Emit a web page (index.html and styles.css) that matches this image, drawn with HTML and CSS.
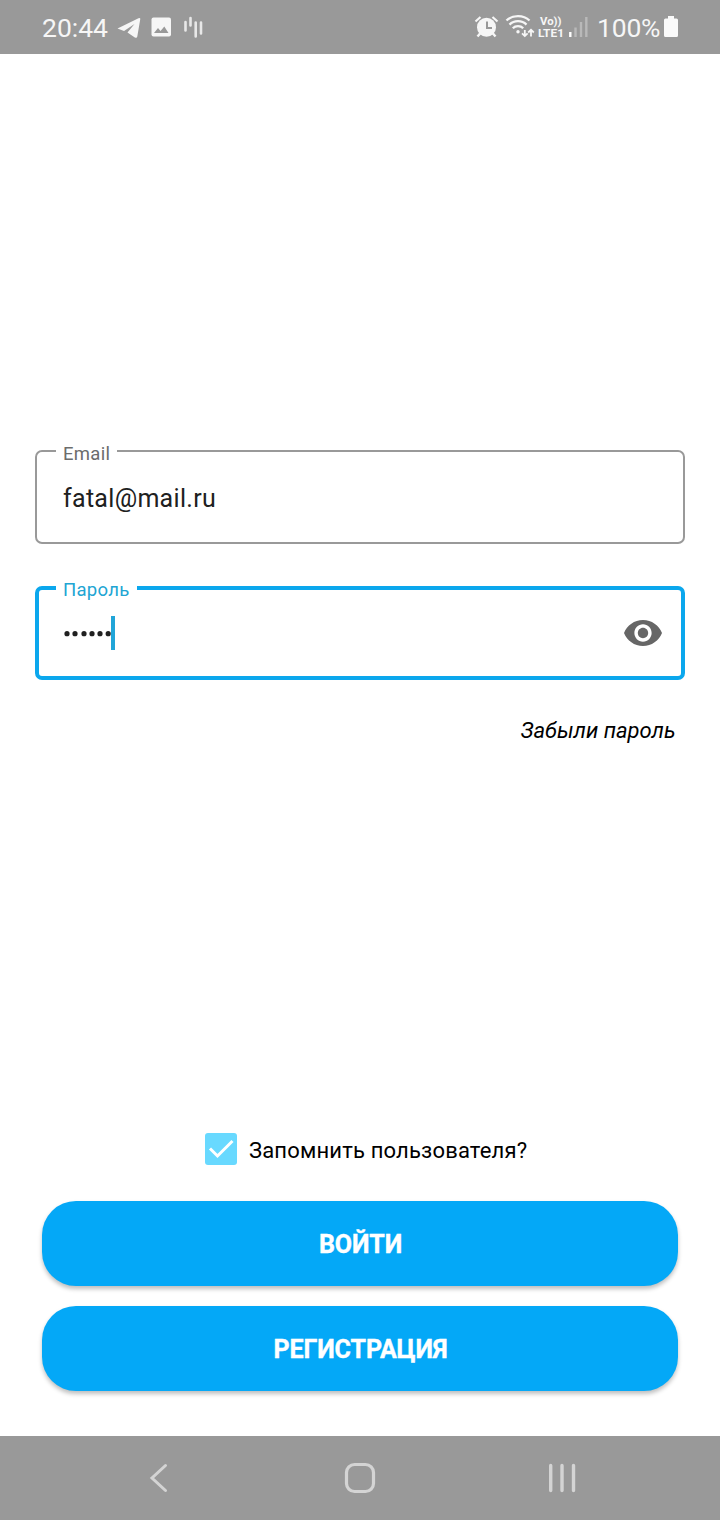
FILE: index.html
```html
<!DOCTYPE html>
<html lang="ru">
<head>
<meta charset="utf-8">
<title>Вход</title>
<link rel="stylesheet" href="styles.css">
</head>
<body>
<div class="screen">
  <header class="status-bar">
    <span class="status-text clock">20:44</span>
    <svg class="notifications" width="90" height="54" viewBox="117 0 90 54">
      <path d="M117.500 28.500L138.500 18.200Q140.800 17.200 140.200 19.500L137.300 36.500Q136.800 38.600 134.800 37.400L127.500 32.500L134.500 24L124 31Z" fill="#f6f6f6"/>
      <rect x="151.500" y="17.500" width="19.500" height="19" rx="2" fill="#f6f6f6"/>
      <path d="M154 33L158 28L160.500 31L164.300 26.500L168.500 33Z" fill="#999"/>
      <path d="M185.500 22V30.500M190.500 18V25.500M195.700 22.500V36.500M201 22.500V33.500" stroke="#e8e8e8" stroke-width="2.600" stroke-linecap="round"/>
    </svg>
    <svg class="indicators" width="118" height="54" viewBox="474 0 118 54">
      <g fill="none" stroke="#f6f6f6">
        <path d="M475.500 21.500L480.500 17M492.500 17L497.500 21.500" stroke-width="2.200"/>
        <path d="M480.500 33L477.500 36.500M492.500 33L495.500 36.500" stroke-width="2.400"/>
        <path d="M506.500 20.500C512.500 14.600 523.500 14.600 529.500 20.500M509.500 24.600C514.200 20 521.800 20 526.500 24.600M512.800 28.300C515.500 25.500 520.500 25.500 523.200 28.300" stroke-width="2.300"/>
        <path d="M524.800 30V36M522 33.300L524.800 36.100L527.600 33.300M531 36.500V30M528.200 32.500L531 29.700L533.800 32.500" stroke-width="1.800"/>
      </g>
      <circle cx="486.500" cy="27.300" r="9.500" fill="#f6f6f6"/>
      <path d="M487 21.500V28H492" fill="none" stroke="#999" stroke-width="2"/>
      <circle cx="518" cy="31.800" r="1.700" fill="#f6f6f6"/>
      <text class="network" x="540" y="24.800" textLength="21.500" lengthAdjust="spacingAndGlyphs">Vo))</text>
      <text class="network" x="538" y="37.200" textLength="26" lengthAdjust="spacingAndGlyphs">LTE1</text>
      <path d="M570.300 32V37" stroke="#fff" stroke-width="2.400"/>
      <path d="M575.500 27.500V37M581 22V37M586.300 17V37" stroke="#b9b9b9" stroke-width="2.400"/>
    </svg>
    <span class="status-text percent">100%</span>
    <svg class="battery" width="14" height="54" viewBox="0 0 14 54">
      <path d="M4 16H10V18.500H12.500Q14 18.500 14 20V35.500Q14 37 12.500 37H1.500Q0 37 0 35.500V20Q0 18.500 1.500 18.500H4Z" fill="#fafafa"/>
    </svg>
  </header>

  <main class="content">
    <div class="field">
      <span class="field-label email-label">Email</span>
      <span class="field-value">fatal@mail.ru</span>
    </div>
    <div class="field focused">
      <span class="field-label password-label">Пароль</span>
      <svg class="password" width="47" height="8" viewBox="0 0 47 8" fill="#202020">
        <circle cx="3" cy="4.700" r="2.600"/><circle cx="11" cy="4.700" r="2.600"/><circle cx="20" cy="4.700" r="2.600"/><circle cx="28" cy="4.700" r="2.600"/><circle cx="36" cy="4.700" r="2.600"/><circle cx="44.200" cy="4.700" r="2.600"/>
      </svg>
      <span class="caret"></span>
      <svg class="eye" width="38" height="26" viewBox="1 4.500 22 15" preserveAspectRatio="none">
        <path d="M12 4.500C7 4.500 2.730 7.610 1 12c1.730 4.390 6 7.500 11 7.500s9.270-3.110 11-7.500c-1.730-4.390-6-7.500-11-7.500zM12 17c-2.760 0-5-2.240-5-5s2.240-5 5-5 5 2.240 5 5-2.240 5-5 5zm0-8c-1.660 0-3 1.340-3 3s1.340 3 3 3 3-1.340 3-3-1.340-3-3-3z" fill="#666"/>
      </svg>
    </div>
    <a class="forgot">Забыли пароль</a>
    <div class="actions">
      <label class="remember">
        <svg width="32" height="32" viewBox="0 0 32 32">
          <rect width="32" height="32" rx="3" fill="#68d9ff"/>
          <path d="M5 15.500L12.500 23L27.500 8" fill="none" stroke="#fff" stroke-width="3"/>
        </svg>
        <span class="remember-text">Запомнить пользователя?</span>
      </label>
      <button class="button login">ВОЙТИ</button>
      <button class="button register">РЕГИСТРАЦИЯ</button>
    </div>
  </main>

  <nav class="nav-bar">
    <svg width="720" height="84" viewBox="0 0 720 84" fill="none" stroke="#d4d4d4">
      <path d="M165.500 29.500L152 42L165.500 54.500" stroke-width="3" stroke-linecap="round"/>
      <rect x="346.500" y="28.500" width="27" height="27" rx="8" stroke-width="3.200"/>
      <path d="M550.700 29.500V54.500M562 29.500V54.500M573.500 29.500V54.500" stroke-width="3.400" stroke-linecap="round"/>
    </svg>
  </nav>
</div>
</body>
</html>
```
FILE: styles.css
```css
* { box-sizing: border-box; }

body {
  margin: 0;
  background: #fff;
  font-family: Roboto, "Noto Sans", sans-serif;
}

.screen {
  width: 720px;
  height: 1520px;
  display: flex;
  flex-direction: column;
}

.status-bar {
  height: 54px;
  flex: none;
  display: flex;
  padding: 0 42px;
  background: #999;
}

.status-text {
  font-size: 26.5px;
  line-height: 56px;
  color: #f6f6f6;
  white-space: nowrap;
}

.clock { width: 75px; }
.percent { width: 67px; letter-spacing: -0.2px; }
.indicators { margin-left: auto; margin-right: 5px; }
.network { font-size: 11px; font-weight: 700; fill: #f6f6f6; }

.content {
  flex: 1;
  display: flex;
  flex-direction: column;
  padding: 396px 35px 45px;
}

.field {
  position: relative;
  height: 94px;
  flex: none;
  display: flex;
  align-items: center;
  padding: 0 21px 0 26px;
  border: 2px solid #999;
  border-radius: 7px;
}

.field.focused {
  margin-top: 42px;
  padding: 0 19px 0 25px;
  border: 4px solid #0ba7ed;
}

.field-label {
  position: absolute;
  top: -12px;
  left: 19px;
  height: 24px;
  padding-left: 7px;
  background: #fff;
  color: #6c6c6c;
  font-size: 18.500px;
  line-height: 28px;
  letter-spacing: 0.3px;
  white-space: nowrap;
}

.email-label { width: 61px; }
.password-label { width: 81px; left: 17px; top: -14px; color: #21a5d3; }

.field-value {
  padding-top: 3px;
  color: #202020;
  font-size: 25px;
  line-height: 32px;
  letter-spacing: 0.3px;
}

.caret { width: 4px; height: 34px; background: #21a5d8; }
.eye { margin-left: auto; }

.forgot {
  align-self: flex-end;
  margin: 36px 9.500px 0 0;
  color: #000;
  font-size: 22px;
  font-style: italic;
  line-height: 30px;
}

.actions {
  margin-top: auto;
  padding: 0 7px;
  display: flex;
  flex-direction: column;
}

.remember {
  display: flex;
  align-items: center;
  gap: 12px;
  margin: 0 0 36px 163px;
  font-size: 22px;
  line-height: 32px;
  white-space: nowrap;
}

.remember-text { padding-top: 3px; line-height: 29px; letter-spacing: 0.17px; }

.button {
  height: 85px;
  padding: 2px 0 0 1px;
  border: 0;
  border-radius: 34px;
  background: #04a8f7;
  box-shadow: 0 3px 4px rgba(0, 0, 0, 0.25);
  color: #fff;
  font-family: inherit;
  font-size: 25px;
  font-weight: 700;
  letter-spacing: -0.1px;
  -webkit-text-stroke: 0.4px #fff;
}

.register { margin-top: 20px; }

.nav-bar { height: 84px; flex: none; background: #999; }
.nav-bar svg { display: block; }
```
